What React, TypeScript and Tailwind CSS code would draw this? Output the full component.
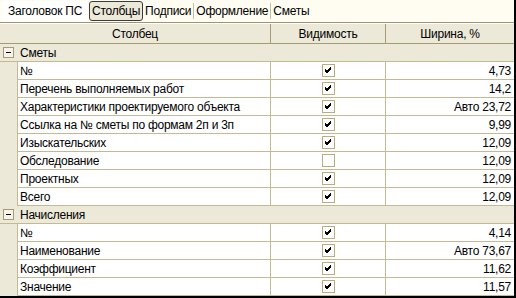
const rows1 = [
  { name: "№", on: true, w: "4,73" },
  { name: "Перечень выполняемых работ", on: true, w: "14,2" },
  { name: "Характеристики проектируемого объекта", on: true, w: "Авто 23,72" },
  { name: "Ссылка на № сметы по формам 2п и 3п", on: true, w: "9,99" },
  { name: "Изыскательских", on: true, w: "12,09" },
  { name: "Обследование", on: false, w: "12,09" },
  { name: "Проектных", on: true, w: "12,09" },
  { name: "Всего", on: true, w: "12,09" },
];

const rows2 = [
  { name: "№", on: true, w: "4,14" },
  { name: "Наименование", on: true, w: "Авто 73,67" },
  { name: "Коэффициент", on: true, w: "11,62" },
  { name: "Значение", on: true, w: "11,57" },
];

function Check({ on }: { on: boolean }) {
  return (
    <div className="w-[13px] h-[13px] border border-[#b9ad7c] bg-white flex items-center justify-center">
      {on && (
        <svg width="9" height="9" viewBox="0 0 9 9">
          <path d="M1 4 L3 6 L7 2 M1 5 L3 7 L7 3 M1 3 L3 5 L7 1" stroke="#000" strokeWidth="1" fill="none" />
        </svg>
      )}
    </div>
  );
}

function Row({ name, on, w }: { name: string; on: boolean; w: string }) {
  return (
    <div className="flex h-[18px]">
      <div className="w-[17px] bg-[#ece9d8]" />
      <div className="w-[253px] bg-white border-l border-b border-[#c3b993] pl-[2px] flex items-center whitespace-nowrap">{name}</div>
      <div className="w-[115px] bg-white border-l border-b border-[#c3b993] flex items-center justify-center">
        <Check on={on} />
      </div>
      <div className="flex-1 bg-white border-l border-b border-[#c3b993] pr-[3px] flex items-center justify-end">{w}</div>
    </div>
  );
}

function Group({ title }: { title: string }) {
  return (
    <div className="flex h-[18px] bg-[#ece9d8] border-b border-[#c3b993] items-center">
      <div className="w-[17px] flex justify-center">
        <div className="w-[11px] h-[11px] border border-[#a69b72] bg-[#f5f3ea] flex items-center justify-center">
          <div className="w-[5px] h-px bg-black" />
        </div>
      </div>
      <span className="pl-[3px]">{title}</span>
    </div>
  );
}

const tabs = ["Заголовок ПС", "Столбцы", "Подписи", "Оформление", "Сметы"];

export default function App() {
  return (
    <div
      className="w-[516px] h-[298px] border-r-2 border-b-2 border-black bg-[#ece9d8] text-[12px] tracking-[-0.25px] text-black overflow-hidden"
      style={{ fontFamily: '"Liberation Sans", Arial, sans-serif' }}
    >
      <div className="h-[23px] bg-[#fffdf2] flex items-center pl-[3px] border-b border-[#9d9573]">
        {tabs.map((t, i) => (
          <div key={t} className="flex items-center h-full">
            {i === 1 ? (
              <div className="h-[20px] px-[2px] flex items-center rounded-[3px] border border-[#3c3c3c] bg-[#ece9d8]">{t}</div>
            ) : i === 0 ? (
              <div className="h-[20px] px-[5px] mr-[2px] flex items-center bg-white">{t}</div>
            ) : (
              <div className="h-[20px] px-[2px] flex items-center">{t}</div>
            )}
            {i > 1 && i < tabs.length - 1 && <div className="w-px h-[16px] bg-[#c8bf98]" />}
          </div>
        ))}
      </div>
      <div className="h-px bg-white" />
      <div className="flex h-[20px] bg-[#ece9d8] border-b border-[#a69b72]">
        <div className="w-[270px] flex items-center justify-center">Столбец</div>
        <div className="w-[115px] border-l border-[#a69b72] flex items-center justify-center">Видимость</div>
        <div className="flex-1 border-l border-[#a69b72] flex items-center justify-center">Ширина, %</div>
      </div>
      <Group title="Сметы" />
      {rows1.map((r, i) => (
        <Row key={i} {...r} />
      ))}
      <Group title="Начисления" />
      {rows2.map((r, i) => (
        <Row key={i} {...r} />
      ))}
    </div>
  );
}
